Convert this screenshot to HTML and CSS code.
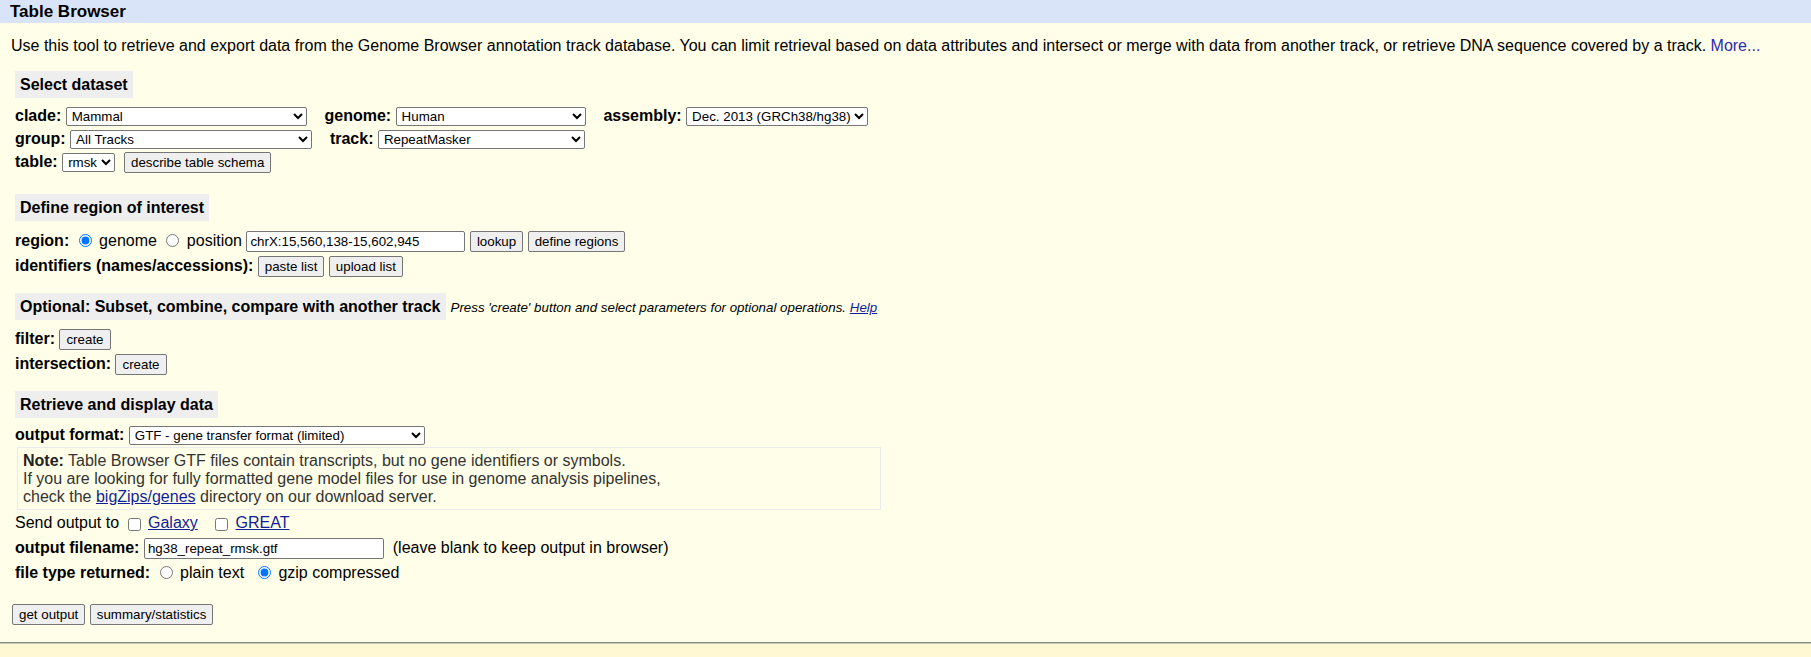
FILE: index.html
```html
<!DOCTYPE html>
<html lang="en">
<head>
<meta charset="utf-8">
<title>Table Browser</title>
<link rel="stylesheet" href="styles.css">
</head>
<body>
<div class="main">
  <div class="title">Table Browser</div>
  <div class="content">
    <p class="intro">Use this tool to retrieve and export data from the Genome Browser annotation track database. You can limit retrieval based on data attributes and intersect or merge with data from another track, or retrieve DNA sequence covered by a track. <a class="more" href="#">More...</a></p>

    <div class="sechead s-dataset"><div class="box">Select dataset</div></div>
    <div class="row r-clade"><b>clade:</b> <select class="sel-clade"><option>Mammal</option></select>&nbsp;&nbsp;&nbsp; <b>genome:</b> <select class="sel-genome"><option>Human</option></select>&nbsp;&nbsp;&nbsp; <b>assembly:</b> <select class="sel-assembly"><option>Dec. 2013 (GRCh38/hg38)</option></select></div>
    <div class="row r-group"><b>group:</b> <select class="sel-group"><option>All Tracks</option></select>&nbsp;&nbsp;&nbsp; <b>track:</b> <select class="sel-track"><option>RepeatMasker</option></select></div>
    <div class="row r-table"><b>table:</b> <select class="sel-table"><option>rmsk</option></select>&nbsp; <button type="button">describe table schema</button></div>

    <div class="sechead s-region"><div class="box">Define region of interest</div></div>
    <div class="row r-region"><b>region:</b> <input type="radio" name="hgta_regionType" checked> genome <input type="radio" name="hgta_regionType"> position <input type="text" class="in-pos" value="chrX:15,560,138-15,602,945"> <button type="button">lookup</button> <button type="button">define regions</button></div>
    <div class="row r-ident"><b>identifiers (names/accessions):</b> <button type="button">paste list</button> <button type="button">upload list</button></div>

    <div class="sechead s-optional"><div class="box">Optional: Subset, combine, compare with another track</div><span class="hint">Press 'create' button and select parameters for optional operations. <a href="#">Help</a></span></div>
    <div class="row r-filter"><b>filter:</b> <button type="button">create</button></div>
    <div class="row r-inter"><b>intersection:</b> <button type="button">create</button></div>

    <div class="sechead s-retrieve"><div class="box">Retrieve and display data</div></div>
    <div class="row r-format"><b>output format:</b> <select class="sel-format"><option>GTF - gene transfer format (limited)</option></select></div>
    <div class="note"><b>Note:</b> Table Browser GTF files contain transcripts, but no gene identifiers or symbols.<br>If you are looking for fully formatted gene model files for use in genome analysis pipelines,<br>check the <a href="#">bigZips/genes</a> directory on our download server.</div>
    <div class="row r-send">Send output to <input type="checkbox"> <a href="#">Galaxy</a>&nbsp;&nbsp;&nbsp;<input type="checkbox"> <a href="#">GREAT</a></div>
    <div class="row r-file"><b>output filename:</b> <input type="text" class="in-file" value="hg38_repeat_rmsk.gtf"> &nbsp;(leave blank to keep output in browser)</div>
    <div class="row r-type"><b>file type returned:</b> <input type="radio" name="hgta_compressType"> plain text&nbsp; <input type="radio" name="hgta_compressType" checked> gzip compressed</div>
    <div class="row r-submit"><button type="button">get output</button> <button type="button">summary/statistics</button></div>
  </div>
</div>
<div class="rule"></div>
</body>
</html>
```

FILE: styles.css
```css
html, body {
  margin: 0;
  padding: 0;
}

body {
  background: #FFF8D2;
  font-family: "Liberation Sans", Arial, Helvetica, sans-serif;
  font-size: 16px;
  color: #000;
}

.main {
  background: #FFFEE8;
  height: 642px;
  overflow: hidden;
}

.title {
  background: #D9E4F8;
  height: 23px;
  line-height: 23px;
  padding-left: 10px;
  font-weight: bold;
  font-size: 17px;
}

.content {
  padding: 0 15px;
}

.intro {
  margin: 13px 0 0 -4px;
  line-height: 19px;
  white-space: nowrap;
}

a {
  color: #121E9A;
}

a.more {
  text-decoration: none;
  color: #2B2BB0;
}

.sechead {
  display: flex;
  align-items: baseline;
  column-gap: 5px;
}

.box {
  background: #EEEEEE;
  font-weight: bold;
  line-height: 19px;
  padding: 4px 5px;
}

.s-dataset { margin-top: 16px; }
.s-region { margin-top: 20px; }
.s-optional { margin-top: 15px; }
.s-retrieve { margin-top: 15px; }

.hint {
  font-style: italic;
  font-size: 13.333px;
}

.row {
  white-space: nowrap;
}

.row select,
.row input[type="text"],
.row button {
  vertical-align: middle;
}

.row input[type="radio"] {
  width: 13px;
  height: 13px;
  margin: 3px 3px 0 5px;
  vertical-align: -1px;
}

.row input[type="checkbox"] {
  width: 13px;
  height: 13px;
  margin: 3px 3px 3px 4px;
  vertical-align: -3px;
}

select,
input,
button {
  font-family: "Liberation Sans", Arial, Helvetica, sans-serif;
  font-size: 13.333px;
}

select {
  height: 19px;
  padding: 0 0 0 1px;
  background: #fff;
  border: 1px solid #767676;
  border-radius: 2px;
  color: #000;
}

button {
  height: 21px;
  padding: 0 6px;
  background: #EFEFEF;
  border: 1px solid #767676;
  border-radius: 2px;
  color: #000;
}

input[type="text"] {
  box-sizing: border-box;
  height: 21px;
  padding: 1px 3px;
  border: 1px solid #767676;
  border-radius: 2px;
  background: #fff;
  color: #000;
}

/* rows */
.r-clade { margin-top: 6px; height: 23px; line-height: 23px; }
.r-group { height: 23px; line-height: 23px; }
.r-table { height: 24px; line-height: 24px; }

.r-region { margin-top: 7px; height: 25px; line-height: 25px; }
.r-ident { height: 25px; line-height: 25px; }

.r-filter { margin-top: 7px; height: 24px; line-height: 24px; }
.r-inter { height: 25px; line-height: 25px; }

.r-format { margin-top: 5px; height: 24px; line-height: 24px; }
.r-send { margin-top: 1px; height: 24px; line-height: 24px; }
.r-file { height: 25px; line-height: 25px; }
.r-type { height: 25px; line-height: 25px; }
.r-submit { margin: 18px 0 0 -3px; height: 21px; line-height: 21px; }

/* control widths */
.sel-clade { width: 241px; }
.sel-genome { width: 190px; }
.sel-assembly { width: 182px; }
.sel-group { width: 242px; }
.sel-track { width: 207px; }
.sel-table { width: 53px; }
.sel-format { width: 296px; }

.in-pos { width: 219px; }
.in-file { width: 240px; }

.note {
  margin-left: 2px;
  width: 853px;
  padding: 4px 4px 3px 5px;
  border: 1px solid #E9EBEF;
  line-height: 18px;
  color: #333;
}

.note b {
  color: #222;
}

.rule {
  border-top: 1px solid #888;
  border-bottom: 1px solid #C8C4B0;
}
```
